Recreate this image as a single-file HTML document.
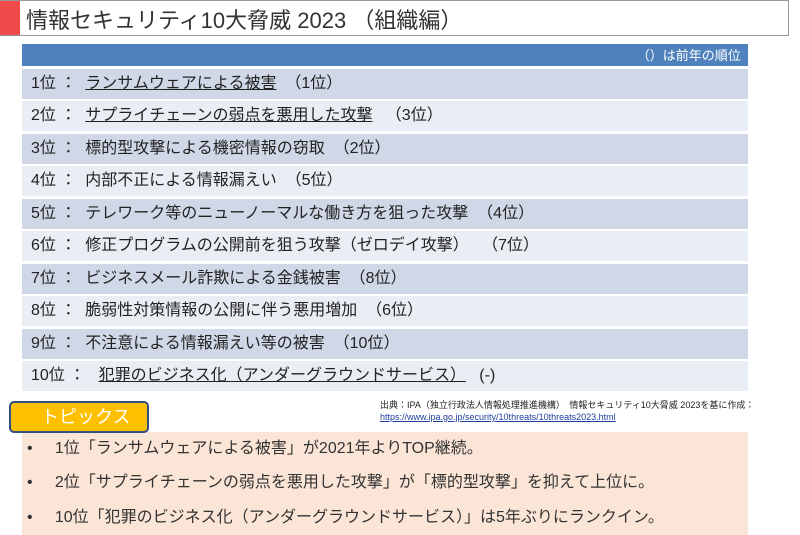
<!DOCTYPE html>
<html><head><meta charset="utf-8"><style>
body{margin:0;width:800px;height:535px;background:#fff;font-family:"Liberation Sans","Noto Sans CJK JP",sans-serif;position:relative;overflow:hidden;color:#222}
.t{position:absolute;left:0;top:0;width:788px;height:34px;border:1px solid #999;border-left:none;}
.red{position:absolute;left:0;top:1px;width:20px;height:34px;background:#f04a4a}
.tt{position:absolute;left:26px;top:3px;font-size:22px;color:#333}
.hd{position:absolute;left:22px;top:44px;width:726px;height:22px;background:#4f81bd;color:#fff;font-size:13px;text-align:right;line-height:24px}
.r{position:absolute;left:22px;width:726px;height:30px;font-size:16px;line-height:30px;white-space:pre}
.r span{padding-left:9px}
.d{background:#d0d8e8}.l{background:#e9edf4}
u{text-decoration-thickness:1px}
.src{position:absolute;left:380px;top:399px;font-size:9px;line-height:12px;color:#222}
.src a{color:#1f3f9f;text-decoration:underline}
.tp{position:absolute;left:9px;top:401px;background:#ffc000;border:2px solid #2f4f7f;border-radius:5px;color:#fff;font-size:18px;line-height:28px;padding-left:30px;box-sizing:border-box;width:140px;height:32px}
.pk{position:absolute;left:22px;top:432px;width:726px;height:103px;background:#fbe5d6}
.b{position:absolute;left:27px;font-size:16px;color:#333;white-space:pre}
</style></head><body>
<div class="t"></div><div class="red"></div>
<div class="tt">情報セキュリティ10大脅威 2023 （組織編）</div>
<div class="hd">（）は前年の順位&nbsp;&nbsp;</div>
<div class="r d" style="top:69px"><span>1位 ：  <u>ランサムウェアによる被害</u>  （1位）</span></div>
<div class="r l" style="top:101px"><span>2位 ：  <u>サプライチェーンの弱点を悪用した攻撃</u>   （3位）</span></div>
<div class="r d" style="top:134px"><span>3位 ：  標的型攻撃による機密情報の窃取  （2位）</span></div>
<div class="r l" style="top:166px"><span>4位 ：  内部不正による情報漏えい  （5位）</span></div>
<div class="r d" style="top:199px"><span>5位 ：  テレワーク等のニューノーマルな働き方を狙った攻撃  （4位）</span></div>
<div class="r l" style="top:231px"><span>6位 ：  修正プログラムの公開前を狙う攻撃（ゼロデイ攻撃）   （7位）</span></div>
<div class="r d" style="top:264px"><span>7位 ：  ビジネスメール詐欺による金銭被害  （8位）</span></div>
<div class="r l" style="top:296px"><span>8位 ：  脆弱性対策情報の公開に伴う悪用増加  （6位）</span></div>
<div class="r d" style="top:329px"><span>9位 ：  不注意による情報漏えい等の被害  （10位）</span></div>
<div class="r l" style="top:361px"><span>10位 ：   <u>犯罪のビジネス化（アンダーグラウンドサービス）</u>   (-)</span></div>
<div class="src">出典：IPA（独立行政法人情報処理推進機構）　情報セキュリティ10大脅威 2023を基に作成：<br><a>https://www.ipa.go.jp/security/10threats/10threats2023.html</a></div>
<div class="pk"></div>
<div class="tp">トピックス</div>
<div class="b" style="top:434px">•     1位「ランサムウェアによる被害」が2021年よりTOP継続。</div>
<div class="b" style="top:468px">•     2位「サプライチェーンの弱点を悪用した攻撃」が「標的型攻撃」を抑えて上位に。</div>
<div class="b" style="top:503px">•     10位「犯罪のビジネス化（アンダーグラウンドサービス）」は5年ぶりにランクイン。</div>
</body></html>
